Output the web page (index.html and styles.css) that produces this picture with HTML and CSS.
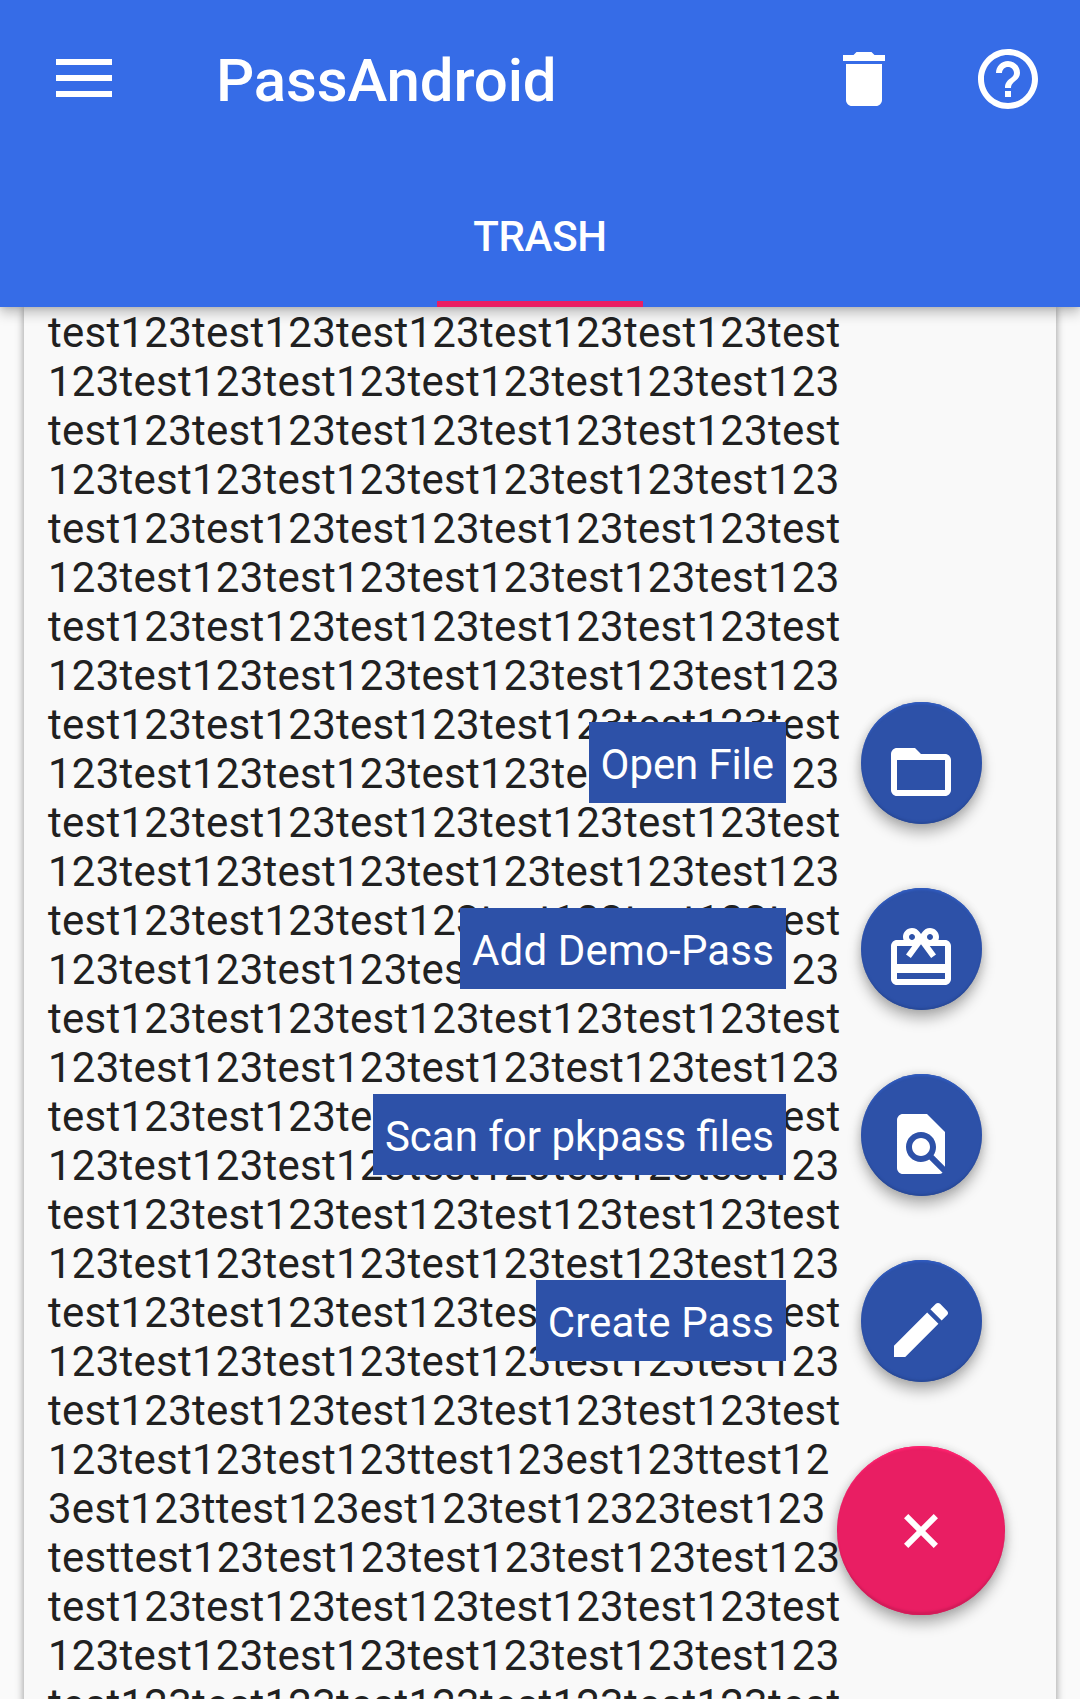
FILE: index.html
```html
<!DOCTYPE html>
<html lang="en">
<head>
<meta charset="utf-8">
<title>PassAndroid</title>
<link rel="stylesheet" href="styles.css">
</head>
<body>
<div class="app">
  <header class="appbar">
    <div class="toolbar">
      <svg class="menu" viewBox="0 0 56 38"><path d="M0 0h56v6H0zM0 16h56v6H0zM0 32h56v6H0z"/></svg>
      <h1 class="title">PassAndroid</h1>
      <div class="actions">
        <svg class="icon" viewBox="0 0 24 24"><path d="M6 19c0 1.100.9 2 2 2h8c1.100 0 2-.9 2-2V7H6v12zM19 4h-3.500l-1-1h-5l-1 1H5v2h14V4z"/></svg>
        <svg class="icon" viewBox="0 0 24 24"><path d="M11 18h2v-2h-2v2zm1-16C6.480 2 2 6.480 2 12s4.480 10 10 10 10-4.480 10-10S17.520 2 12 2zm0 18c-4.410 0-8-3.590-8-8s3.590-8 8-8 8 3.590 8 8-3.590 8-8 8zm0-14c-2.210 0-4 1.790-4 4h2c0-1.100.9-2 2-2s2 .9 2 2c0 2-3 1.750-3 5h2c0-2.250 3-2.500 3-5 0-2.210-1.790-4-4-4z"/></svg>
      </div>
    </div>
    <nav class="tabs"><div class="tab">TRASH</div></nav>
  </header>
  <main class="content">
    <article class="card">
      <div class="text">test123test123test123test123test123test<br>123test123test123test123test123test123<br>test123test123test123test123test123test<br>123test123test123test123test123test123<br>test123test123test123test123test123test<br>123test123test123test123test123test123<br>test123test123test123test123test123test<br>123test123test123test123test123test123<br>test123test123test123test123test123test<br>123test123test123test123test123test123<br>test123test123test123test123test123test<br>123test123test123test123test123test123<br>test123test123test123test123test123test<br>123test123test123test123test123test123<br>test123test123test123test123test123test<br>123test123test123test123test123test123<br>test123test123test123test123test123test<br>123test123test123test123test123test123<br>test123test123test123test123test123test<br>123test123test123test123test123test123<br>test123test123test123test123test123test<br>123test123test123test123test123test123<br>test123test123test123test123test123test<br>123test123test123ttest123est123ttest12<br>3est123ttest123est123test12323test123<br>testtest123test123test123test123test123<br>test123test123test123test123test123test<br>123test123test123test123test123test123<br>test123test123test123test123test123test</div>
    </article>
  </main>
  <div class="fab-menu">
    <div class="action">
      <span class="label label-open">Open File</span>
      <button class="fab" aria-label="Open File"><svg class="icon" viewBox="0 0 24 24"><path d="M20 6h-8l-2-2H4c-1.100 0-1.990.9-1.990 2L2 18c0 1.100.9 2 2 2h16c1.100 0 2-.9 2-2V8c0-1.100-.9-2-2-2zm0 12H4V8h16v10z"/></svg></button>
    </div>
    <div class="action">
      <span class="label label-demo">Add Demo-Pass</span>
      <button class="fab" aria-label="Add Demo-Pass"><svg class="icon" viewBox="0 0 24 24"><path d="M20 6h-2.180c.11-.31.18-.65.18-1 0-1.660-1.340-3-3-3-1.050 0-1.960.54-2.500 1.350l-.5.67-.5-.68C10.960 2.540 10.050 2 9 2 7.340 2 6 3.340 6 5c0 .35.070.69.180 1H4c-1.110 0-1.990.89-1.990 2L2 19c0 1.110.89 2 2 2h16c1.110 0 2-.89 2-2V8c0-1.110-.89-2-2-2zm-5-2c.55 0 1 .45 1 1s-.45 1-1 1-1-.45-1-1 .45-1 1-1zM9 4c.55 0 1 .45 1 1s-.45 1-1 1-1-.45-1-1 .45-1 1-1zm11 15H4v-2h16v2zm0-5H4V8h5.080L7 10.830 8.620 12 11 8.760l1-1.360 1 1.360L15.380 12 17 10.830 14.920 8H20v6z"/></svg></button>
    </div>
    <div class="action">
      <span class="label">Scan for pkpass files</span>
      <button class="fab" aria-label="Scan for pkpass files"><svg class="icon" viewBox="0 0 24 24"><path d="M20 19.590V8l-6-6H6c-1.100 0-1.990.9-1.990 2L4 20c0 1.100.89 2 1.990 2H18c.45 0 .85-.15 1.190-.4l-4.430-4.430c-.8.52-1.740.83-2.760.83-2.760 0-5-2.240-5-5s2.240-5 5-5 5 2.240 5 5c0 1.020-.31 1.960-.83 2.750L20 19.590zM9 13c0 1.660 1.340 3 3 3s3-1.340 3-3-1.340-3-3-3-3 1.340-3 3z"/></svg></button>
    </div>
    <div class="action">
      <span class="label label-create">Create Pass</span>
      <button class="fab" aria-label="Create Pass"><svg class="icon" viewBox="0 0 24 24"><path d="M3 17.250V21h3.750L17.810 9.940l-3.750-3.750L3 17.250zM20.710 7.040c.39-.39.39-1.020 0-1.410l-2.340-2.340c-.39-.39-1.020-.39-1.410 0l-1.830 1.830 3.750 3.750 1.830-1.830z"/></svg></button>
    </div>
    <button class="fab fab-main" aria-label="Close"><svg class="icon" viewBox="0 0 24 24"><path transform="rotate(45 12 12)" d="M19 13h-6v6h-2v-6H5v-2h6V5h2v6h6v2z"/></svg></button>
  </div>
</div>
</body>
</html>
```
FILE: styles.css
```css
* {
  box-sizing: border-box;
}

body {
  margin: 0;
  background: #fafafa;
  font-family: Roboto, sans-serif;
}

.app {
  position: relative;
  display: flex;
  flex-direction: column;
  height: 1699px;
  overflow: hidden;
}

/* App bar */
.appbar {
  position: relative;
  z-index: 1;
  flex: none;
  display: flex;
  flex-direction: column;
  height: 307px;
  background: #366ce7;
  color: #fff;
  box-shadow: 0 6px 12px rgba(0, 0, 0, 0.24), 0 0 6px rgba(0, 0, 0, 0.14);
}

.toolbar {
  display: flex;
  align-items: center;
  height: 158px;
  padding: 0 36px 0 56px;
}

.icon {
  display: block;
  flex: none;
  width: 72px;
  height: 72px;
  fill: currentColor;
}

.menu {
  flex: none;
  width: 56px;
  height: 38px;
  margin-top: -2px;
  fill: currentColor;
}

.title {
  flex: 1;
  margin: 4px 0 0 104px;
  font-size: 60px;
  font-weight: 500;
  line-height: 70px;
  letter-spacing: -0.15px;
}

.actions {
  display: flex;
  gap: 72px;
}

.tabs {
  flex: 1;
  display: flex;
  justify-content: center;
}

.tab {
  display: flex;
  align-items: center;
  justify-content: center;
  width: 206px;
  padding-top: 14px;
  border-bottom: 6px solid #e91e63;
  font-size: 42px;
  font-weight: 500;
  letter-spacing: -0.3px;
}

/* Pass card */
.content {
  flex: 1;
  min-height: 0;
  padding: 0 24px;
}

.card {
  height: 1430px;
  padding: 1px 24px 0;
  background: #f9f9f9;
  box-shadow: 0 0 8px rgba(0, 0, 0, 0.42);
}

.text {
  color: #212121;
  font-size: 42px;
  line-height: 49px;
  letter-spacing: 0.25px;
  white-space: nowrap;
}

/* Floating action menu, laid over the content */
.fab-menu {
  position: absolute;
  z-index: 2;
  top: 702px;
  right: 75px;
  display: flex;
  flex-direction: column;
  align-items: flex-end;
  gap: 64px;
}

.action {
  display: flex;
  align-items: flex-start;
  gap: 75px;
  height: 122px;
  padding-right: 23px;
}

.label {
  height: 81px;
  margin-top: 20px;
  padding: 18px 12px 14px;
  background: #2d51a8;
  color: #fff;
  font-size: 42px;
  line-height: 49px;
  white-space: nowrap;
}

.label-open {
  letter-spacing: -0.1px;
}

.label-demo {
  letter-spacing: 0.16px;
}

.label-create {
  letter-spacing: 0.1px;
}

.fab {
  display: flex;
  align-items: center;
  justify-content: center;
  width: 121px;
  height: 122px;
  padding: 18px 1px 0 0;
  border: 0;
  border-radius: 50%;
  background: #2d51a8;
  color: #fff;
  box-shadow: inset 0 3px 2px -1px #305bbf, inset 0 -3px 2px -1px #284998,
    0 9px 14px rgba(0, 0, 0, 0.28), 0 0 10px rgba(0, 0, 0, 0.14);
}

.fab-main {
  width: 168px;
  height: 169px;
  padding: 0;
  background: #e91e63;
  box-shadow: inset 0 4px 2px -2px #ff2370, inset 0 -4px 2px -1px #d21b59,
    0 9px 14px rgba(0, 0, 0, 0.28), 0 0 10px rgba(0, 0, 0, 0.14);
}
```
